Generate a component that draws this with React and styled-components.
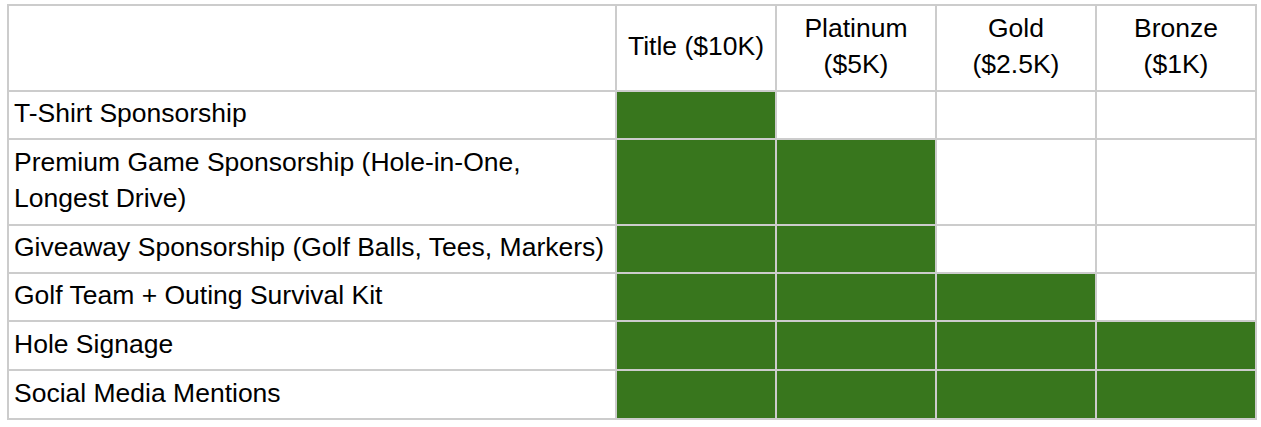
import React from 'react';
import styled, { createGlobalStyle } from 'styled-components';

const GlobalStyle = createGlobalStyle`
  body {
    margin: 0;
    background: #ffffff;
    font-family: 'Liberation Sans', Arial, sans-serif;
  }
`;

const Page = styled.div`
  padding: 4px 0 0 7px;
`;

// Sheet grid: outer top/left border here, each cell draws right/bottom
const Sheet = styled.div`
  display: grid;
  grid-template-columns: 608px repeat(4, 160px);
  grid-template-rows: 86px 48px 86px 48px 48px 49px 49px;
  width: max-content;
  border-top: 2px solid #cccccc;
  border-left: 2px solid #cccccc;
`;

const Cell = styled.div`
  box-sizing: border-box;
  display: flex;
  align-items: center;
  padding-bottom: 4px;
  border-right: 2px solid #cccccc;
  border-bottom: 2px solid #cccccc;
  background: ${(p) => (p.$filled ? '#38761d' : '#ffffff')};
  color: #000000;
  font-size: 26.5px;
  line-height: 36px;
`;

const HeadCell = styled(Cell)`
  justify-content: center;
  text-align: center;
  white-space: nowrap;
`;

const LabelCell = styled(Cell)`
  padding: 0 3px 4px 5px;
`;

const tiers = [
  ['Title ($10K)'],
  ['Platinum', '($5K)'],
  ['Gold', '($2.5K)'],
  ['Bronze', '($1K)'],
];

const perks = [
  { label: 'T-Shirt Sponsorship', level: 1 },
  { label: 'Premium Game Sponsorship (Hole-in-One, Longest Drive)', level: 2 },
  { label: 'Giveaway Sponsorship (Golf Balls, Tees, Markers)', level: 2 },
  { label: 'Golf Team + Outing Survival Kit', level: 3 },
  { label: 'Hole Signage', level: 4 },
  { label: 'Social Media Mentions', level: 4 },
];

const App = () => {
  return (
    <Page>
      <GlobalStyle />
      <Sheet>
        <Cell />
        {tiers.map((lines, i) => (
          <HeadCell key={i}>
            <div>
              {lines.map((line, j) => (
                <div key={j}>{line}</div>
              ))}
            </div>
          </HeadCell>
        ))}
        {perks.map((perk) => (
          <React.Fragment key={perk.label}>
            <LabelCell>{perk.label}</LabelCell>
            {tiers.map((_, i) => (
              <Cell key={i} $filled={i < perk.level} />
            ))}
          </React.Fragment>
        ))}
      </Sheet>
    </Page>
  );
};

export default App;
